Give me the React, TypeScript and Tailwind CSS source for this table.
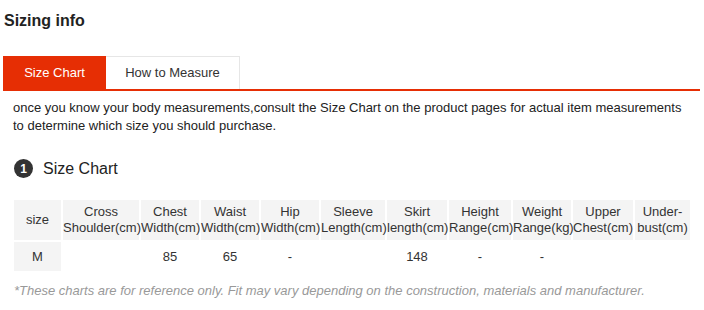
const headers: { label: [string, string?]; w: string }[] = [
  { label: ["size"], w: "w-[47px]" },
  { label: ["Cross", "Shoulder(cm)"], w: "w-[76px]" },
  { label: ["Chest", "Width(cm)"], w: "w-[58px]" },
  { label: ["Waist", "Width(cm)"], w: "w-[58px]" },
  { label: ["Hip", "Width(cm)"], w: "w-[58px]" },
  { label: ["Sleeve", "Length(cm)"], w: "w-[64px]" },
  { label: ["Skirt", "length(cm)"], w: "w-[60px]" },
  { label: ["Height", "Range(cm)"], w: "w-[62px]" },
  { label: ["Weight", "Range(kg)"], w: "w-[58px]" },
  { label: ["Upper", "Chest(cm)"], w: "w-[60px]" },
  { label: ["Under-", "bust(cm)"], w: "w-[55px]" },
];

const row = ["M", "", "85", "65", "-", "", "148", "-", "-", "", ""];

export default function App() {
  return (
    <div className="w-[704px] h-[310px] overflow-hidden bg-white font-['Liberation_Sans',Arial,sans-serif] text-[#333]">
      <h2 className="pl-[4px] pt-[11px] text-[16px] font-bold leading-[20px] text-[#222]">Sizing info</h2>

      {/* tabs */}
      <div className="ml-[3px] mr-[4px] mt-[25px] flex border-b-2 border-[#e62e04]">
        <div className="flex h-[33px] w-[103px] items-center justify-center bg-[#e62e04] text-[13px] text-white">
          Size Chart
        </div>
        <div className="flex h-[33px] w-[134px] items-center justify-center border-r border-t border-[#e6e6e6] text-[13px] text-[#333]">
          How to Measure
        </div>
      </div>

      <p className="pl-[13px] pr-[22px] pt-[8px] text-[13px] leading-[18px] text-[#222]">
        once you know your body measurements,consult the Size Chart on the product pages for actual item measurements to
        determine which size you should purchase.
      </p>

      <div className="ml-[14px] mt-[24px] flex h-[19px] items-center gap-[10px]">
        <span className="flex h-[19px] w-[19px] items-center justify-center rounded-full bg-[#333] text-[12px] font-bold text-white">
          1
        </span>
        <span className="text-[16px] leading-[19px] text-[#222]">Size Chart</span>
      </div>

      <table className="ml-[12px] mt-[20px] w-[680px] table-fixed border-separate border-spacing-[2px] text-[13px] leading-[16px] text-[#333]">
        <colgroup>
          {headers.map((h, i) => (
            <col key={i} className={h.w} />
          ))}
        </colgroup>
        <thead>
          <tr className="h-[40px]">
            {headers.map((h, i) => (
              <th key={i} className="whitespace-nowrap bg-[#f4f4f4] p-0 text-center font-normal">
                {h.label[0]}
                {h.label[1] && (
                  <>
                    <br />
                    {h.label[1]}
                  </>
                )}
              </th>
            ))}
          </tr>
        </thead>
        <tbody>
          <tr className="h-[29px]">
            {row.map((v, i) => (
              <td key={i} className={`p-0 text-center ${i === 0 ? "bg-[#f4f4f4]" : ""}`}>
                {v}
              </td>
            ))}
          </tr>
        </tbody>
      </table>

      <p className="mt-[9px] px-[14px] text-[13px] italic leading-[18px] text-[#999]">
        *These charts are for reference only. Fit may vary depending on the construction, materials and manufacturer.
      </p>
    </div>
  );
}
